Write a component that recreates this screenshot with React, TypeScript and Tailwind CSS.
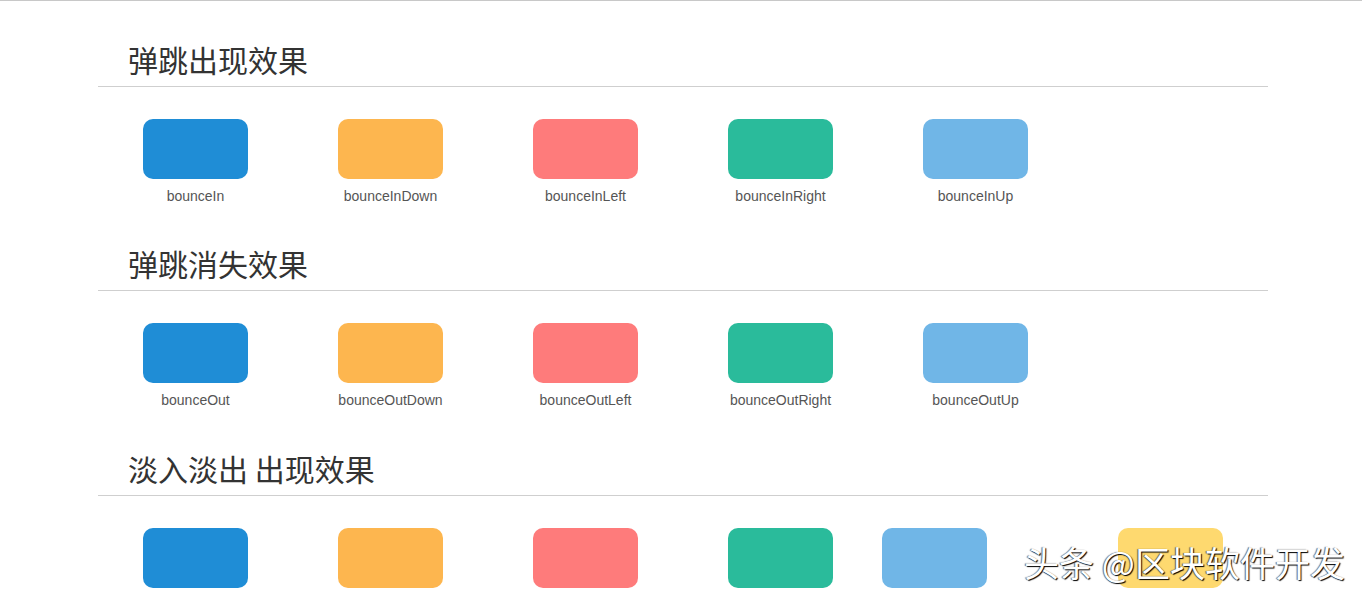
const colors = ["bg-[#1f8dd6]", "bg-[#fdb64f]", "bg-[#fe7b7b]", "bg-[#2abb9b]", "bg-[#70b6e7]", "bg-[#fed96f]"];

type Item = { name: string; color: string; shift?: string };

const sections: { title: string; items: Item[]; gap: string; hideLabels?: boolean }[] = [
  {
    title: "弹跳出现效果",
    gap: "pt-[40px]",
    items: [
      { name: "bounceIn", color: colors[0] },
      { name: "bounceInDown", color: colors[1] },
      { name: "bounceInLeft", color: colors[2] },
      { name: "bounceInRight", color: colors[3] },
      { name: "bounceInUp", color: colors[4] },
    ],
  },
  {
    title: "弹跳消失效果",
    gap: "pt-[39px]",
    items: [
      { name: "bounceOut", color: colors[0] },
      { name: "bounceOutDown", color: colors[1] },
      { name: "bounceOutLeft", color: colors[2] },
      { name: "bounceOutRight", color: colors[3] },
      { name: "bounceOutUp", color: colors[4] },
    ],
  },
  {
    title: "淡入淡出 出现效果",
    gap: "pt-[40px]",
    // labels for this row sit below the fold
    hideLabels: true,
    items: [
      { name: "fadeIn", color: colors[0] },
      { name: "fadeInDown", color: colors[1] },
      { name: "fadeInLeft", color: colors[2] },
      { name: "fadeInRight", color: colors[3] },
      { name: "fadeInUp", color: colors[4], shift: "-translate-x-[41px]" },
      { name: "fadeInLeftBig", color: colors[5] },
    ],
  },
];

function Demo({ item, hideLabel }: { item: Item; hideLabel?: boolean }) {
  return (
    <div className="w-[195px] shrink-0 flex flex-col items-center">
      <div className={`w-[105px] h-[60px] rounded-[10px] ${item.color} ${item.shift ?? ""}`} />
      {!hideLabel && (
        <p className="mt-[7px] h-[20px] leading-[20px] text-[14px] text-[#555] font-['Liberation_Sans',Arial,sans-serif]">
          {item.name}
        </p>
      )}
    </div>
  );
}

export default function App() {
  return (
    <div className="relative h-[597px] overflow-hidden bg-white border-t border-[#c8c8c8]">
      <div className="ml-[98px] w-[1170px]">
        {sections.map((s) => (
          <section key={s.title} className={s.gap}>
            <h2 className="pl-[30px] pb-[9px] border-b border-[#cfcfcf] h-[46px] leading-[36px] text-[30px] text-[#333] font-['Noto_Sans_CJK_SC',sans-serif] font-normal">
              {s.title}
            </h2>
            <div className="flex pt-[32px]">
              {s.items.map((it) => (
                <Demo key={it.name} item={it} hideLabel={s.hideLabels} />
              ))}
            </div>
          </section>
        ))}
      </div>

      {/* watermark */}
      <div className="absolute left-[1024px] top-[538px] text-[35px] leading-[46px] text-white font-['Noto_Sans_CJK_SC',sans-serif] [text-shadow:1px_1px_1px_#000,-1px_0_1px_rgba(0,0,0,0.6)] whitespace-nowrap">
        头条 @区块软件开发
      </div>
    </div>
  );
}
